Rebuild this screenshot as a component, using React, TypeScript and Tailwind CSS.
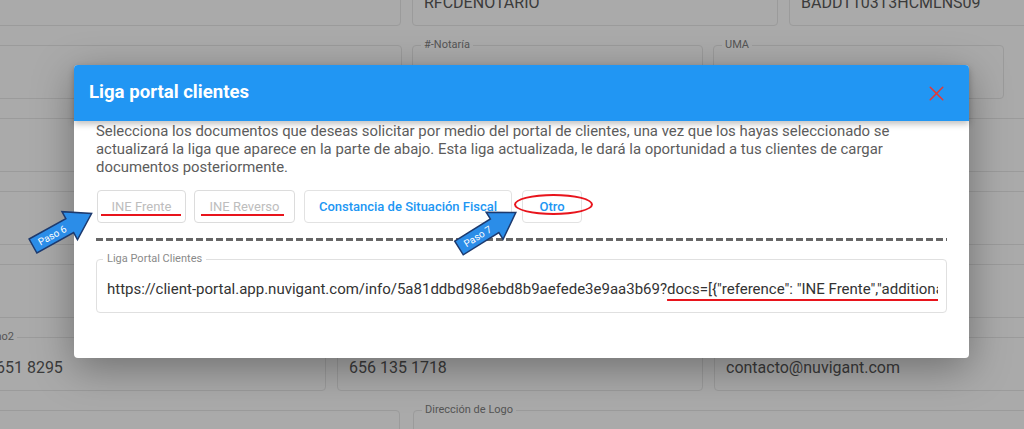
import { X } from "lucide-react";

type FieldProps = {
  className: string;
  label?: string;
  value?: string;
};

function Field({ className, label, value }: FieldProps) {
  return (
    <div className={`relative h-[54px] shrink-0 rounded-[4px] border border-[#9b9b9b] ${className}`}>
      {label && (
        <span className="absolute -top-[8px] left-[8px] bg-[#aaaaaa] px-[3px] text-[11px] leading-[14px] text-[#555]">
          {label}
        </span>
      )}
      {value && (
        <div className="flex h-full items-center whitespace-nowrap pl-[11px] pt-[8px] text-[16px] text-[#3b3b3b]">
          {value}
        </div>
      )}
    </div>
  );
}

function Arrow({ x, y, angle, text }: { x: number; y: number; angle: number; text: string }) {
  return (
    <g transform={`translate(${x} ${y}) rotate(${angle})`}>
      <polygon
        points="0,-8 42,-8 42,-16 67,0 42,16 42,8 0,8"
        fill="#2b8de8"
        stroke="#1d3a6e"
        strokeWidth="1.5"
        strokeLinejoin="miter"
      />
      <text x="22" y="3.5" fill="#fff" fontSize="10" textAnchor="middle" fontFamily="Roboto, sans-serif">
        {text}
      </text>
    </g>
  );
}

export default function App() {
  const url =
    "https://client-portal.app.nuvigant.com/info/5a81ddbd986ebd8b9aefede3e9aa3b69?";
  const docs = 'docs=[{"reference": "INE Frente","additionalInfo": ""}]';

  return (
    <div className="relative h-[429px] w-[1024px] overflow-hidden bg-[#aaaaaa] font-['Roboto',sans-serif]">
      {/* dimmed form behind the dialog */}
      <div className="-mt-[28px] flex flex-col gap-[19px]">
        <div className="-ml-[20px] flex gap-[11px]">
          <Field className="w-[421px]" />
          <Field className="w-[366px]" value="RFCDENOTARIO" />
          <Field className="w-[300px]" value="BADDT103T3HCMLNS09" />
        </div>
        <div className="-ml-[20px] flex gap-[10px]">
          <Field className="w-[422px]" />
          <Field className="w-[291px]" label="#-Notaría" />
          <Field className="w-[291px]" label="UMA" />
        </div>
        <div className="-ml-[20px] flex gap-[10px]">
          <Field className="w-[422px]" />
          <Field className="w-[291px]" />
          <Field className="w-[330px]" />
        </div>
        <div className="-ml-[20px] flex gap-[10px]">
          <Field className="w-[422px]" />
          <Field className="w-[291px]" />
          <Field className="w-[330px]" />
        </div>
        <div className="-ml-[20px] flex gap-[10px]">
          <Field className="w-[422px]" />
          <Field className="w-[291px]" />
          <Field className="w-[330px]" />
        </div>
        <div className="-ml-[47px] flex gap-[11px]">
          <Field className="w-[373px]" label="Teléfono2" value="656 651 8295" />
          <Field className="w-[366px]" label="Teléfono3" value="656 135 1718" />
          <Field className="w-[330px]" label="Correo" value="contacto@nuvigant.com" />
        </div>
        <div className="-ml-[20px] flex gap-[13px]">
          <Field className="w-[420px]" />
          <Field className="w-[640px]" label="Dirección de Logo" />
        </div>
      </div>

      {/* dialog */}
      <div className="absolute left-[74px] top-[65px] flex h-[293px] w-[895px] flex-col rounded-[4px] bg-white shadow-[0_10px_40px_rgba(0,0,0,0.35)]">
        <div className="relative z-10 flex h-[56px] shrink-0 items-center justify-between rounded-t-[4px] bg-[#2196f3] pl-[15px] pr-[20px] shadow-[0_3px_6px_rgba(0,0,0,0.25)]">
          <h2 className="text-[18.6px] font-bold text-white">Liga portal clientes</h2>
          <X className="h-[25px] w-[25px] text-[#e53935]" strokeWidth={1.5} />
        </div>

        <div className="flex flex-col px-[22px] pt-[1px]">
          <p className="text-[14.9px] leading-[18px] text-[#5c5c5c]">
            <span className="block whitespace-nowrap">
              Selecciona los documentos que deseas solicitar por medio del portal de clientes, una vez que los hayas seleccionado se
            </span>
            <span className="block whitespace-nowrap">
              actualizará la liga que aparece en la parte de abajo. Esta liga actualizada, le dará la oportunidad a tus clientes de cargar
            </span>
            <span className="block whitespace-nowrap">documentos posteriormente.</span>
          </p>

          <div className="mt-[14px] flex items-center gap-[8px] pl-[1px]">
            <button className="relative flex h-[33px] w-[89px] items-center justify-center rounded-[4px] border border-[#dcdcdc] text-[13px] text-[#bdbdbd]">
              INE Frente
              <span className="absolute bottom-[6px] left-[3px] right-[4px] h-[2px] bg-[#e8141c]" />
            </button>
            <button className="relative flex h-[33px] w-[101px] items-center justify-center rounded-[4px] border border-[#dcdcdc] text-[13px] text-[#bdbdbd]">
              INE Reverso
              <span className="absolute bottom-[6px] left-[6px] right-[10px] h-[2px] bg-[#e8141c]" />
            </button>
            <button className="ml-[1px] flex h-[33px] w-[208px] items-center justify-center rounded-[4px] border border-[#e2e2e2] text-[13px] font-medium text-[#2196f3]">
              Constancia de Situación Fiscal
            </button>
            <button className="relative ml-[2px] flex h-[33px] w-[60px] items-center justify-center rounded-[4px] border border-[#e2e2e2] text-[13px] font-medium text-[#2196f3]">
              Otro
              <span className="absolute -left-[9px] top-[3px] h-[21px] w-[79px] rounded-[50%] border-2 border-[#e8141c]" />
            </button>
          </div>

          <div className="mt-[15px] h-[3px] w-full bg-[repeating-linear-gradient(90deg,#666_0_7px,transparent_7px_10px)]" />

          <div className="relative mt-[18px] h-[54px] rounded-[4px] border border-[#e0e0e0] pl-[10px] pr-[8px]">
            <span className="absolute -top-[8px] left-[6px] bg-white px-[4px] text-[11px] leading-[14px] text-[#8a8a8a]">
              Liga Portal Clientes
            </span>
            <div className="flex h-full items-center overflow-hidden whitespace-nowrap pt-[7px] text-[15px] text-[#333]">
              {url}
              <span className="underline decoration-[#e8141c] decoration-2 underline-offset-[5px]">{docs}</span>
            </div>
          </div>
        </div>
      </div>

      {/* annotations */}
      <svg className="pointer-events-none absolute inset-0" width="1024" height="429">
        <Arrow x={33} y={246} angle={-29} text="Paso 6" />
        <Arrow x={459} y={248} angle={-32} text="Paso 7" />
      </svg>
    </div>
  );
}
